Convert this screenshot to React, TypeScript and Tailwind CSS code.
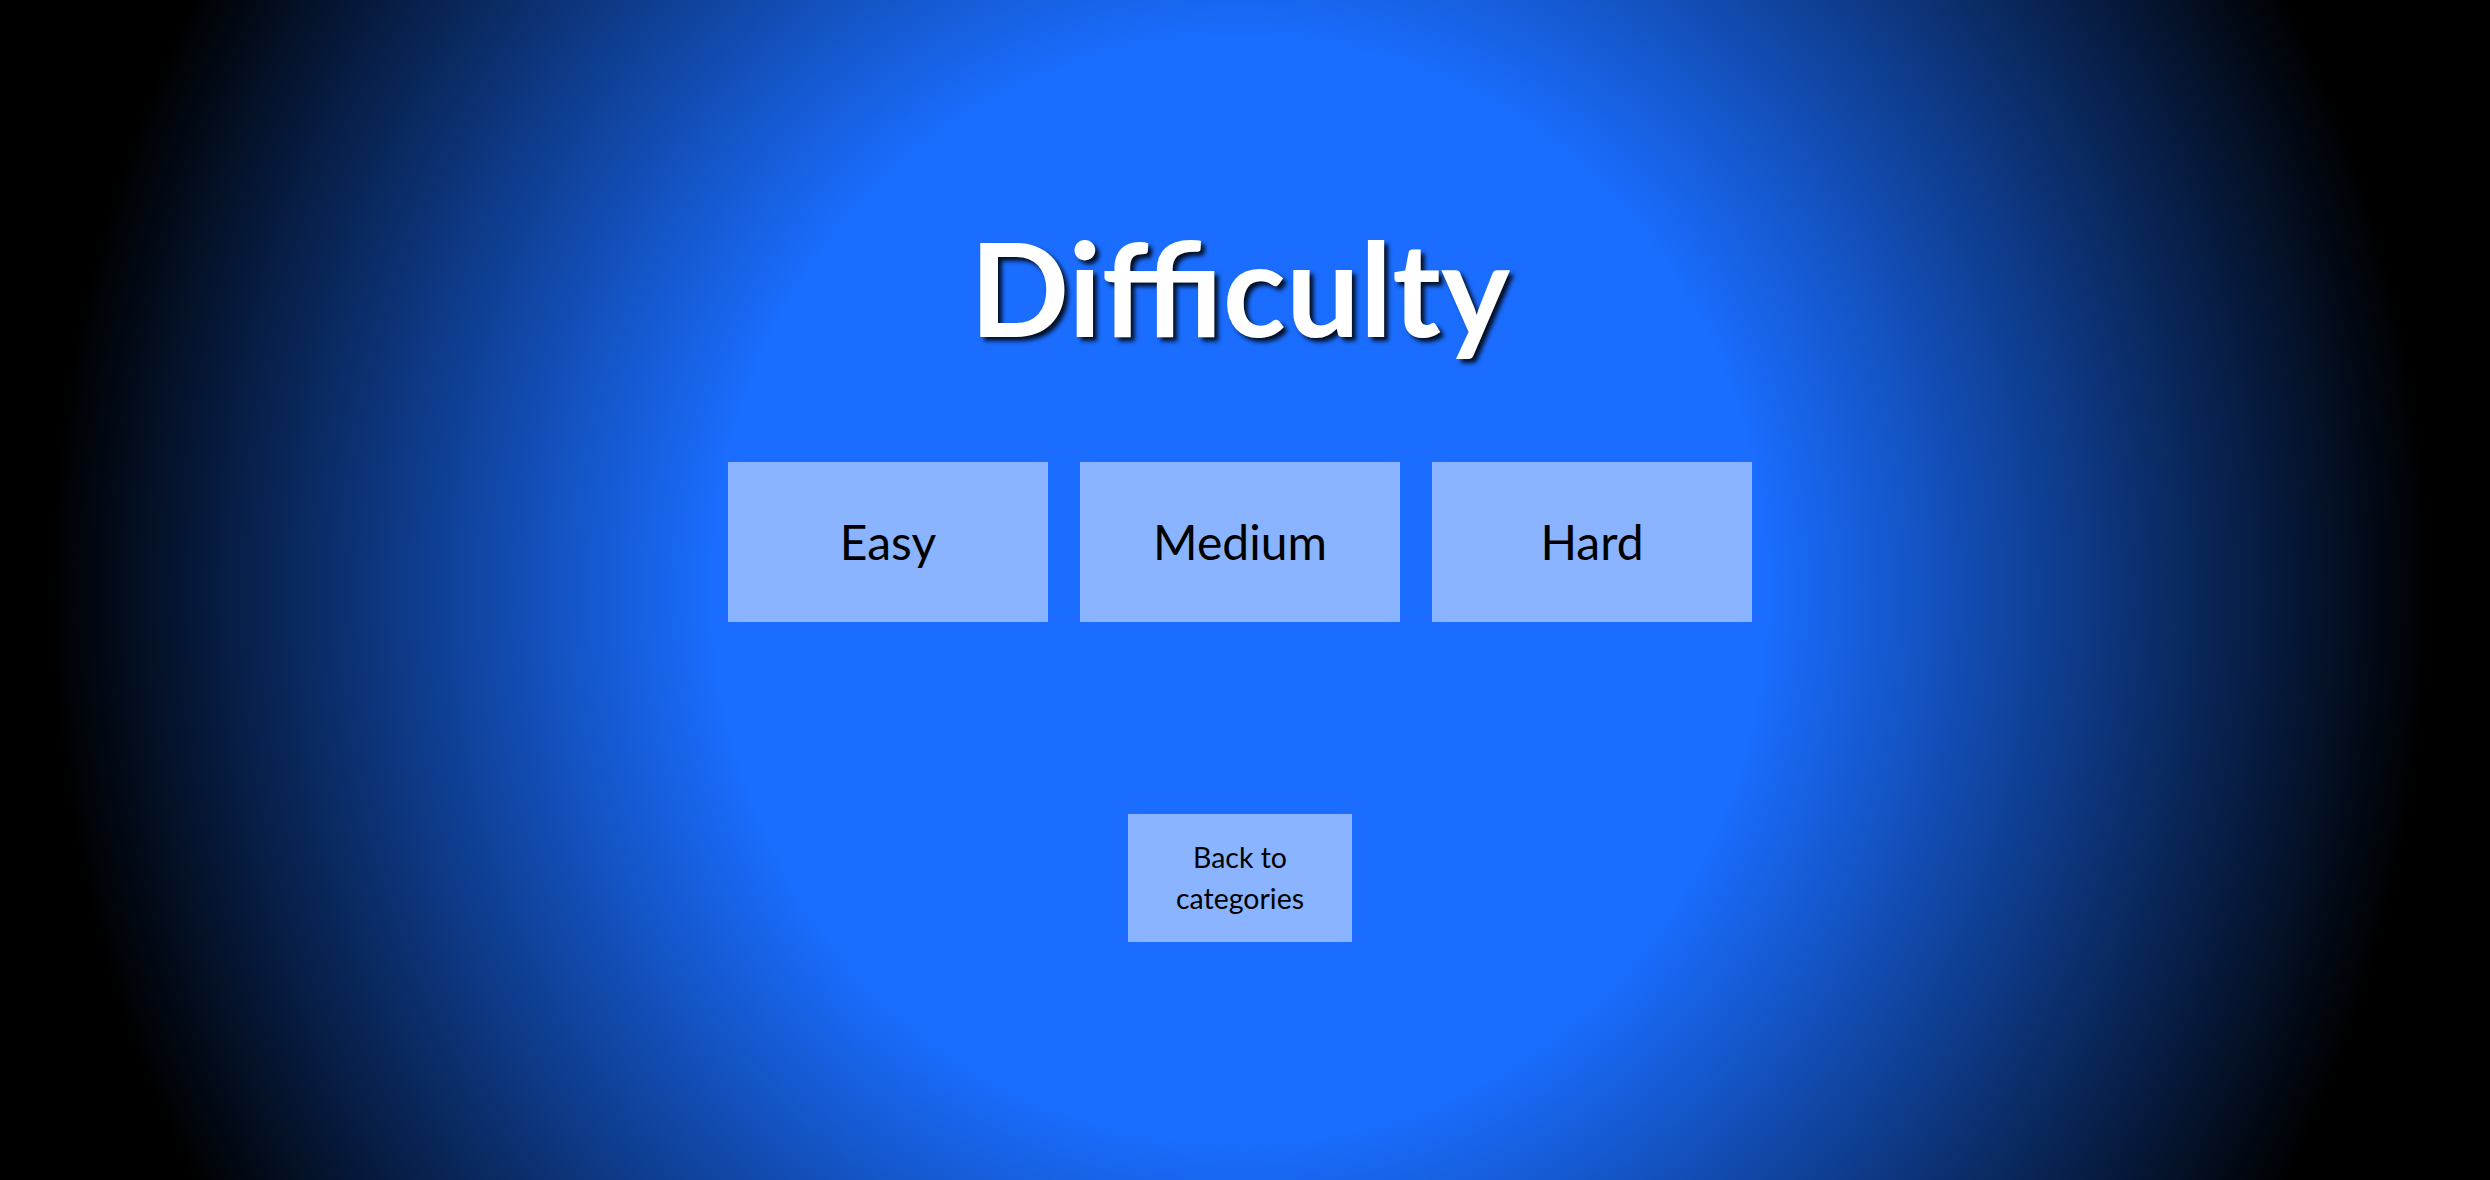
import React from 'react';

const levels = ['Easy', 'Medium', 'Hard'];

function LevelButton({ label }: { label: string }) {
  return (
    <button className="w-[320px] h-[160px] bg-[#8ab4ff] text-black text-[48px] leading-[1.2] flex items-center justify-center">
      {label}
    </button>
  );
}

export default function App() {
  return (
    <div
      className="w-full h-[1180px] overflow-hidden bg-[radial-gradient(ellipse_1192px_1247px_at_1240px_590px,#1a6dff_44%,#000_100%)]"
      style={{ fontFamily: 'Lato, "Noto Sans", sans-serif' }}
    >
      <div className="flex flex-col items-center pt-[208px] pr-[10px]">
        <h1 className="text-white font-bold text-[131px] leading-[1.2] [text-shadow:4px_4px_4px_rgba(0,0,0,0.85)]">
          Difficulty
        </h1>

        <div className="flex gap-8 mt-[97px]">
          {levels.map((l) => (
            <LevelButton key={l} label={l} />
          ))}
        </div>

        <button className="mt-[192px] w-[224px] h-[128px] bg-[#8ab4ff] text-black text-[28.5px] leading-[41px] px-4 flex items-center justify-center text-center">
          Back to categories
        </button>
      </div>
    </div>
  );
}
